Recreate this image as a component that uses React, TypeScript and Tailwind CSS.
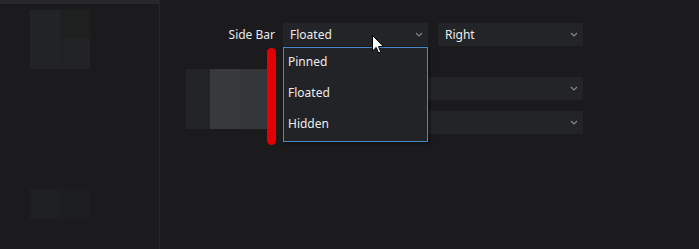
import React from "react"

function Chevron() {
  return (
    <svg width="8" height="5" viewBox="0 0 8 5" className="shrink-0">
      <path d="M1 1 L4 4 L7 1" fill="none" stroke="#85868b" strokeWidth="1.2" />
    </svg>
  )
}

function Select({ value, className }: { value?: string; className: string }) {
  return (
    <div className={`flex h-[23px] items-center justify-between bg-[#232428] pl-[7px] pr-[5px] ${className}`}>
      <span className="text-[12px] text-[#ececec]">{value}</span>
      <Chevron />
    </div>
  )
}

function Cursor() {
  return (
    <svg width="13" height="20" viewBox="0 0 13 20" className="absolute left-[372px] top-[35px]">
      <path
        d="M0.5 0.5 L0.5 16 L4.2 12.4 L6.6 18 L8.8 17 L6.5 11.6 L11.5 11.6 Z"
        fill="#ffffff"
        stroke="#000000"
        strokeWidth="1"
        strokeLinejoin="round"
      />
    </svg>
  )
}

export default function App() {
  return (
    <div
      className="relative flex h-[249px] w-[699px] overflow-hidden bg-[#1b1b1d]"
      style={{ fontFamily: '"Noto Sans", "Open Sans", sans-serif' }}
    >
      {/* left panel */}
      <div className="flex w-[160px] shrink-0 flex-col border-r border-[#242528]">
        <div className="h-[4px] bg-[#28282c]" />
        <div className="ml-[30px] mt-[6px] flex h-[59px] w-[60px]">
          <div className="w-[30px] bg-[#222325]" />
          <div className="flex w-[30px] flex-col">
            <div className="h-[28px] bg-[#1e1f1f]" />
            <div className="flex-1 bg-[#212224]" />
          </div>
        </div>
        <div className="ml-[30px] mt-[120px] flex h-[30px] w-[60px]">
          <div className="w-[30px] bg-[#1e1f20]" />
          <div className="w-[30px] bg-[#1d1e1f]" />
        </div>
      </div>

      {/* settings */}
      <div className="flex flex-1 flex-col pt-[23px]">
        <div className="flex items-center">
          <div className="w-[123px] pr-[8px] text-right text-[12px] text-[#e8e8e8]">Side Bar</div>
          <Select value="Floated" className="w-[145px]" />
          <Select value="Right" className="ml-[10px] w-[145px]" />
        </div>
        <div className="mt-[23px] flex">
          <div className="ml-[26px] flex h-[60px] w-[81px]">
            <div className="w-[24px] bg-[#232427]" />
            <div className="w-[30px] bg-[#38393c]" />
            <div className="w-[27px] bg-[#35363a]" />
          </div>
          <div className="ml-[16px] flex flex-col pt-[8px]">
            <Select className="w-[300px]" />
            <Select className="mt-[11px] w-[300px]" />
          </div>
        </div>
      </div>

      {/* annotation */}
      <div className="absolute left-[267px] top-[48px] h-[97px] w-[9px] rounded-full bg-[#e40000]" />

      {/* open menu */}
      <div className="absolute left-[283px] top-[47px] flex w-[145px] flex-col border border-[#4a86c8] bg-[#222327] shadow-[2px_2px_3px_rgba(0,0,0,0.4)]">
        {["Pinned", "Floated", "Hidden"].map((item) => (
          <div key={item} className="flex h-[31px] items-center pb-[4px] pl-[4px] text-[12px] text-[#ececec]">
            {item}
          </div>
        ))}
      </div>

      <Cursor />
    </div>
  )
}
